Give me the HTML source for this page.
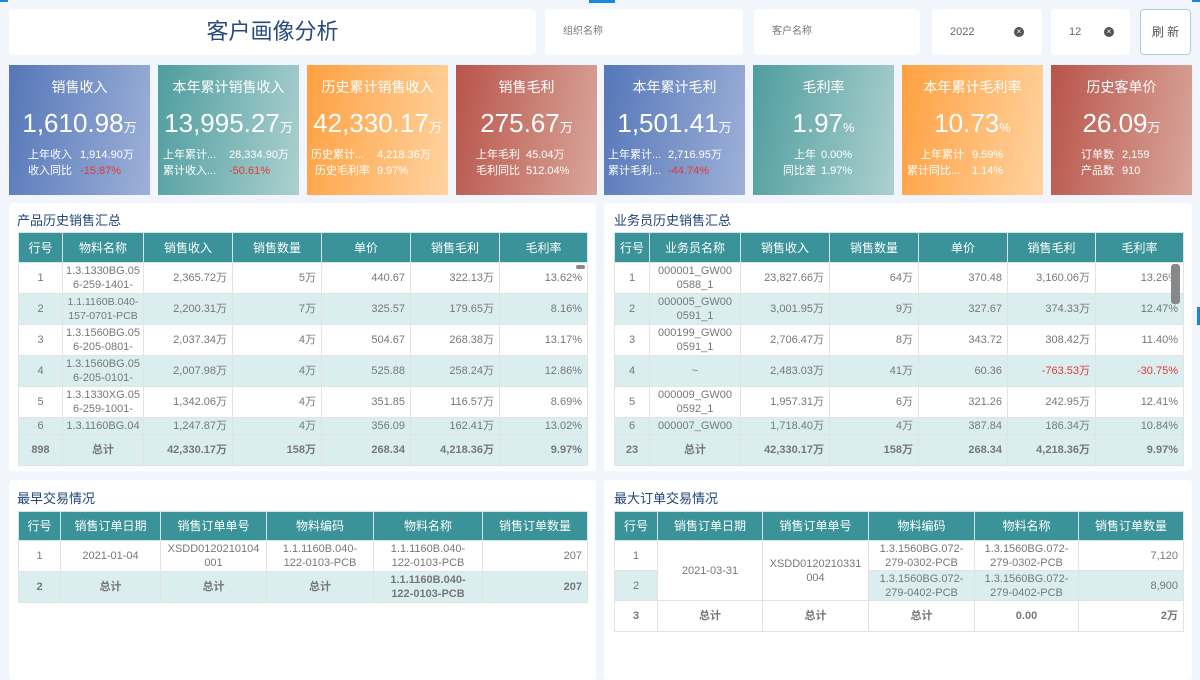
<!DOCTYPE html>
<html><head><meta charset="utf-8"><style>
*{margin:0;padding:0;box-sizing:border-box}
body{width:1200px;height:675px;background:#f2f6fc;font-family:"Liberation Sans","Noto Sans CJK SC",sans-serif;position:relative;overflow:hidden;color:#666}
.box{position:absolute;background:#fff;border-radius:4px}
.ab{position:absolute}
.card{position:absolute;top:65px;width:141px;height:130px;color:#fff;overflow:hidden}
.card .t{position:absolute;top:13px;width:100%;text-align:center;font-size:14px;line-height:18px}
.card .v{position:absolute;top:42px;width:100%;text-align:center;font-size:26px;line-height:32px}
.card .v small{font-size:13px}
.card .l{position:absolute;font-size:11px;line-height:14px;white-space:nowrap}
.red{color:#e53935}
table{border-collapse:collapse;table-layout:fixed;position:absolute;font-size:11px}
td,th{border:1px solid #e3e3e3;overflow:hidden;line-height:14px}
th{background:#3a9399;color:#fff;font-weight:normal;font-size:12px;border-color:#d0e6e7;text-align:center}
td{color:#777;text-align:right;padding:0 5px}
td.c{text-align:center;padding:0 1px}
tr.s td{background:#daeef0}
tr.tot td{background:#daeef0;font-weight:bold;color:#777}
.pt{position:absolute;font-size:13px;color:#224477}
</style></head><body>
<div class="ab" style="left:0;top:0;width:8px;height:2px;background:#1b86e0"></div>
<div class="ab" style="left:589px;top:0;width:26px;height:3px;background:#1b86e0"></div>
<div class="ab" style="left:1192px;top:0;width:8px;height:2px;background:#1b86e0"></div>
<div class="ab" style="left:1197px;top:307px;width:3px;height:18px;background:#1b86e0"></div>

<div class="box" style="left:9px;top:9px;width:527px;height:46px;font-size:22px;color:#2a4a7c;text-align:center;line-height:46px">客户画像分析</div>
<div class="box" style="left:545px;top:9px;width:198px;height:46px;font-size:10px;color:#777;line-height:46px;padding-left:18px">组织名称</div>
<div class="box" style="left:754px;top:9px;width:166px;height:46px;font-size:10px;color:#777;line-height:46px;padding-left:18px">客户名称</div>
<div class="box" style="left:932px;top:9px;width:110px;height:46px;font-size:11px;color:#666;line-height:46px;padding-left:18px">2022<span style="position:absolute;left:82px;top:18px;width:10px;height:10px;border-radius:50%;background:#555;color:#fff;font-size:8px;line-height:10px;text-align:center">×</span></div>
<div class="box" style="left:1051px;top:9px;width:79px;height:46px;font-size:11px;color:#666;line-height:46px;padding-left:18px">12<span style="position:absolute;left:53px;top:18px;width:10px;height:10px;border-radius:50%;background:#555;color:#fff;font-size:8px;line-height:10px;text-align:center">×</span></div>
<div class="box" style="left:1140px;top:9px;width:51px;height:46px;font-size:12px;color:#555;line-height:44px;text-align:center;border:1px solid #a9d0d3">刷 新</div>

<div class="card" style="left:9px;background:linear-gradient(100deg,#5577b8,#9db0d8)"><div class="t">销售收入</div><div class="v">1,610.98<small>万</small></div><div class="l" style="left:19px;top:83px">上年收入</div><div class="l" style="left:71px;top:83px">1,914.90万</div><div class="l" style="left:19px;top:99px">收入同比</div><div class="l red" style="left:71px;top:99px">-15.87%</div></div>
<div class="card" style="left:158px;background:linear-gradient(100deg,#4f9d9f,#acd0cf)"><div class="t">本年累计销售收入</div><div class="v">13,995.27<small>万</small></div><div class="l" style="left:5px;top:83px">上年累计...</div><div class="l" style="left:71px;top:83px">28,334.90万</div><div class="l" style="left:5px;top:99px">累计收入...</div><div class="l red" style="left:71px;top:99px">-50.61%</div></div>
<div class="card" style="left:307px;background:linear-gradient(100deg,#ffa040,#ffd3a0)"><div class="t">历史累计销售收入</div><div class="v">42,330.17<small>万</small></div><div class="l" style="left:4px;top:83px">历史累计...</div><div class="l" style="left:70px;top:83px">4,218.36万</div><div class="l" style="left:8px;top:99px">历史毛利率</div><div class="l" style="left:70px;top:99px">9.97%</div></div>
<div class="card" style="left:456px;background:linear-gradient(100deg,#b9544a,#d9a69b)"><div class="t">销售毛利</div><div class="v">275.67<small>万</small></div><div class="l" style="left:20px;top:83px">上年毛利</div><div class="l" style="left:70px;top:83px">45.04万</div><div class="l" style="left:20px;top:99px">毛利同比</div><div class="l" style="left:70px;top:99px">512.04%</div></div>
<div class="card" style="left:604px;background:linear-gradient(100deg,#5577b8,#9db0d8)"><div class="t">本年累计毛利</div><div class="v">1,501.41<small>万</small></div><div class="l" style="left:4px;top:83px">上年累计...</div><div class="l" style="left:64px;top:83px">2,716.95万</div><div class="l" style="left:4px;top:99px">累计毛利...</div><div class="l red" style="left:64px;top:99px">-44.74%</div></div>
<div class="card" style="left:753px;background:linear-gradient(100deg,#4f9d9f,#acd0cf)"><div class="t">毛利率</div><div class="v">1.97<small>%</small></div><div class="l" style="left:41px;top:83px">上年</div><div class="l" style="left:68px;top:83px">0.00%</div><div class="l" style="left:30px;top:99px">同比差</div><div class="l" style="left:68px;top:99px">1.97%</div></div>
<div class="card" style="left:902px;background:linear-gradient(100deg,#ffa040,#ffd3a0)"><div class="t">本年累计毛利率</div><div class="v">10.73<small>%</small></div><div class="l" style="left:18px;top:83px">上年累计</div><div class="l" style="left:70px;top:83px">9.59%</div><div class="l" style="left:5px;top:99px">累计同比...</div><div class="l" style="left:70px;top:99px">1.14%</div></div>
<div class="card" style="left:1051px;background:linear-gradient(100deg,#b9544a,#d9a69b)"><div class="t">历史客单价</div><div class="v">26.09<small>万</small></div><div class="l" style="left:30px;top:83px">订单数</div><div class="l" style="left:71px;top:83px">2,159</div><div class="l" style="left:30px;top:99px">产品数</div><div class="l" style="left:71px;top:99px">910</div></div>

<div class="box" style="left:9px;top:203px;width:587px;height:268px"></div>
<div class="box" style="left:604px;top:203px;width:588px;height:268px"></div>
<div class="box" style="left:9px;top:480px;width:587px;height:200px"></div>
<div class="box" style="left:604px;top:480px;width:588px;height:200px"></div>
<div class="pt" style="left:17px;top:210px">产品历史销售汇总</div>
<div class="pt" style="left:614px;top:210px">业务员历史销售汇总</div>
<div class="pt" style="left:17px;top:488px">最早交易情况</div>
<div class="pt" style="left:614px;top:488px">最大订单交易情况</div>

<table style="left:18px;top:232px;width:569px">
<colgroup><col style="width:44px"><col style="width:81px"><col style="width:89px"><col style="width:89px"><col style="width:89px"><col style="width:89px"><col style="width:88px"></colgroup>
<tr style="height:30px"><th>行号</th><th>物料名称</th><th>销售收入</th><th>销售数量</th><th>单价</th><th>销售毛利</th><th>毛利率</th></tr>
<tr style="height:31px"><td class="c">1</td><td class="c">1.3.1330BG.05 6-259-1401-</td><td>2,365.72万</td><td>5万</td><td>440.67</td><td>322.13万</td><td>13.62%</td></tr>
<tr class="s" style="height:31px"><td class="c">2</td><td class="c" style="font-size:10.5px">1.1.1160B.040-<br>157-0701-PCB</td><td>2,200.31万</td><td>7万</td><td>325.57</td><td>179.65万</td><td>8.16%</td></tr>
<tr style="height:31px"><td class="c">3</td><td class="c">1.3.1560BG.05 6-205-0801-</td><td>2,037.34万</td><td>4万</td><td>504.67</td><td>268.38万</td><td>13.17%</td></tr>
<tr class="s" style="height:31px"><td class="c">4</td><td class="c">1.3.1560BG.05 6-205-0101-</td><td>2,007.98万</td><td>4万</td><td>525.88</td><td>258.24万</td><td>12.86%</td></tr>
<tr style="height:31px"><td class="c">5</td><td class="c">1.3.1330XG.05 6-259-1001-</td><td>1,342.06万</td><td>4万</td><td>351.85</td><td>116.57万</td><td>8.69%</td></tr>
<tr class="s" style="height:17px"><td class="c">6</td><td class="c">1.3.1160BG.04</td><td>1,247.87万</td><td>4万</td><td>356.09</td><td>162.41万</td><td>13.02%</td></tr>
<tr class="tot" style="height:31px"><td class="c">898</td><td class="c">总计</td><td>42,330.17万</td><td>158万</td><td>268.34</td><td>4,218.36万</td><td>9.97%</td></tr>
</table>
<div class="ab" style="left:576px;top:265px;width:9px;height:4px;border-radius:2px;background:#888"></div>

<table style="left:614px;top:232px;width:569px">
<colgroup><col style="width:35px"><col style="width:91px"><col style="width:89px"><col style="width:89px"><col style="width:89px"><col style="width:88px"><col style="width:88px"></colgroup>
<tr style="height:30px"><th>行号</th><th>业务员名称</th><th>销售收入</th><th>销售数量</th><th>单价</th><th>销售毛利</th><th>毛利率</th></tr>
<tr style="height:31px"><td class="c">1</td><td class="c">000001_GW00 0588_1</td><td>23,827.66万</td><td>64万</td><td>370.48</td><td>3,160.06万</td><td>13.26%</td></tr>
<tr class="s" style="height:31px"><td class="c">2</td><td class="c">000005_GW00 0591_1</td><td>3,001.95万</td><td>9万</td><td>327.67</td><td>374.33万</td><td>12.47%</td></tr>
<tr style="height:31px"><td class="c">3</td><td class="c">000199_GW00 0591_1</td><td>2,706.47万</td><td>8万</td><td>343.72</td><td>308.42万</td><td>11.40%</td></tr>
<tr class="s" style="height:31px"><td class="c">4</td><td class="c">~</td><td>2,483.03万</td><td>41万</td><td>60.36</td><td class="red">-763.53万</td><td class="red">-30.75%</td></tr>
<tr style="height:31px"><td class="c">5</td><td class="c">000009_GW00 0592_1</td><td>1,957.31万</td><td>6万</td><td>321.26</td><td>242.95万</td><td>12.41%</td></tr>
<tr class="s" style="height:17px"><td class="c">6</td><td class="c">000007_GW00</td><td>1,718.40万</td><td>4万</td><td>387.84</td><td>186.34万</td><td>10.84%</td></tr>
<tr class="tot" style="height:31px"><td class="c">23</td><td class="c">总计</td><td>42,330.17万</td><td>158万</td><td>268.34</td><td>4,218.36万</td><td>9.97%</td></tr>
</table>
<div class="ab" style="left:1171px;top:264px;width:9px;height:40px;border-radius:3px;background:#888"></div>

<table style="left:18px;top:511px;width:569px">
<colgroup><col style="width:42px"><col style="width:100px"><col style="width:106px"><col style="width:107px"><col style="width:109px"><col style="width:105px"></colgroup>
<tr style="height:29px"><th>行号</th><th>销售订单日期</th><th>销售订单单号</th><th>物料编码</th><th>物料名称</th><th>销售订单数量</th></tr>
<tr style="height:31px"><td class="c">1</td><td class="c">2021-01-04</td><td class="c">XSDD0120210104 001</td><td class="c">1.1.1160B.040-<br>122-0103-PCB</td><td class="c">1.1.1160B.040-<br>122-0103-PCB</td><td>207</td></tr>
<tr class="tot" style="height:31px"><td class="c">2</td><td class="c">总计</td><td class="c">总计</td><td class="c">总计</td><td class="c">1.1.1160B.040-<br>122-0103-PCB</td><td>207</td></tr>
</table>

<table style="left:614px;top:511px;width:569px">
<colgroup><col style="width:43px"><col style="width:105px"><col style="width:106px"><col style="width:106px"><col style="width:104px"><col style="width:105px"></colgroup>
<tr style="height:29px"><th>行号</th><th>销售订单日期</th><th>销售订单单号</th><th>物料编码</th><th>物料名称</th><th>销售订单数量</th></tr>
<tr style="height:30px"><td class="c">1</td><td class="c" rowspan="2" style="background:#fff">2021-03-31</td><td class="c" rowspan="2" style="background:#fff">XSDD0120210331 004</td><td class="c">1.3.1560BG.072-<br>279-0302-PCB</td><td class="c">1.3.1560BG.072-<br>279-0302-PCB</td><td>7,120</td></tr>
<tr class="s" style="height:30px"><td class="c">2</td><td class="c">1.3.1560BG.072-<br>279-0402-PCB</td><td class="c">1.3.1560BG.072-<br>279-0402-PCB</td><td>8,900</td></tr>
<tr style="height:31px;font-weight:bold"><td class="c">3</td><td class="c">总计</td><td class="c">总计</td><td class="c">总计</td><td class="c">0.00</td><td>2万</td></tr>
</table>
</body></html>
